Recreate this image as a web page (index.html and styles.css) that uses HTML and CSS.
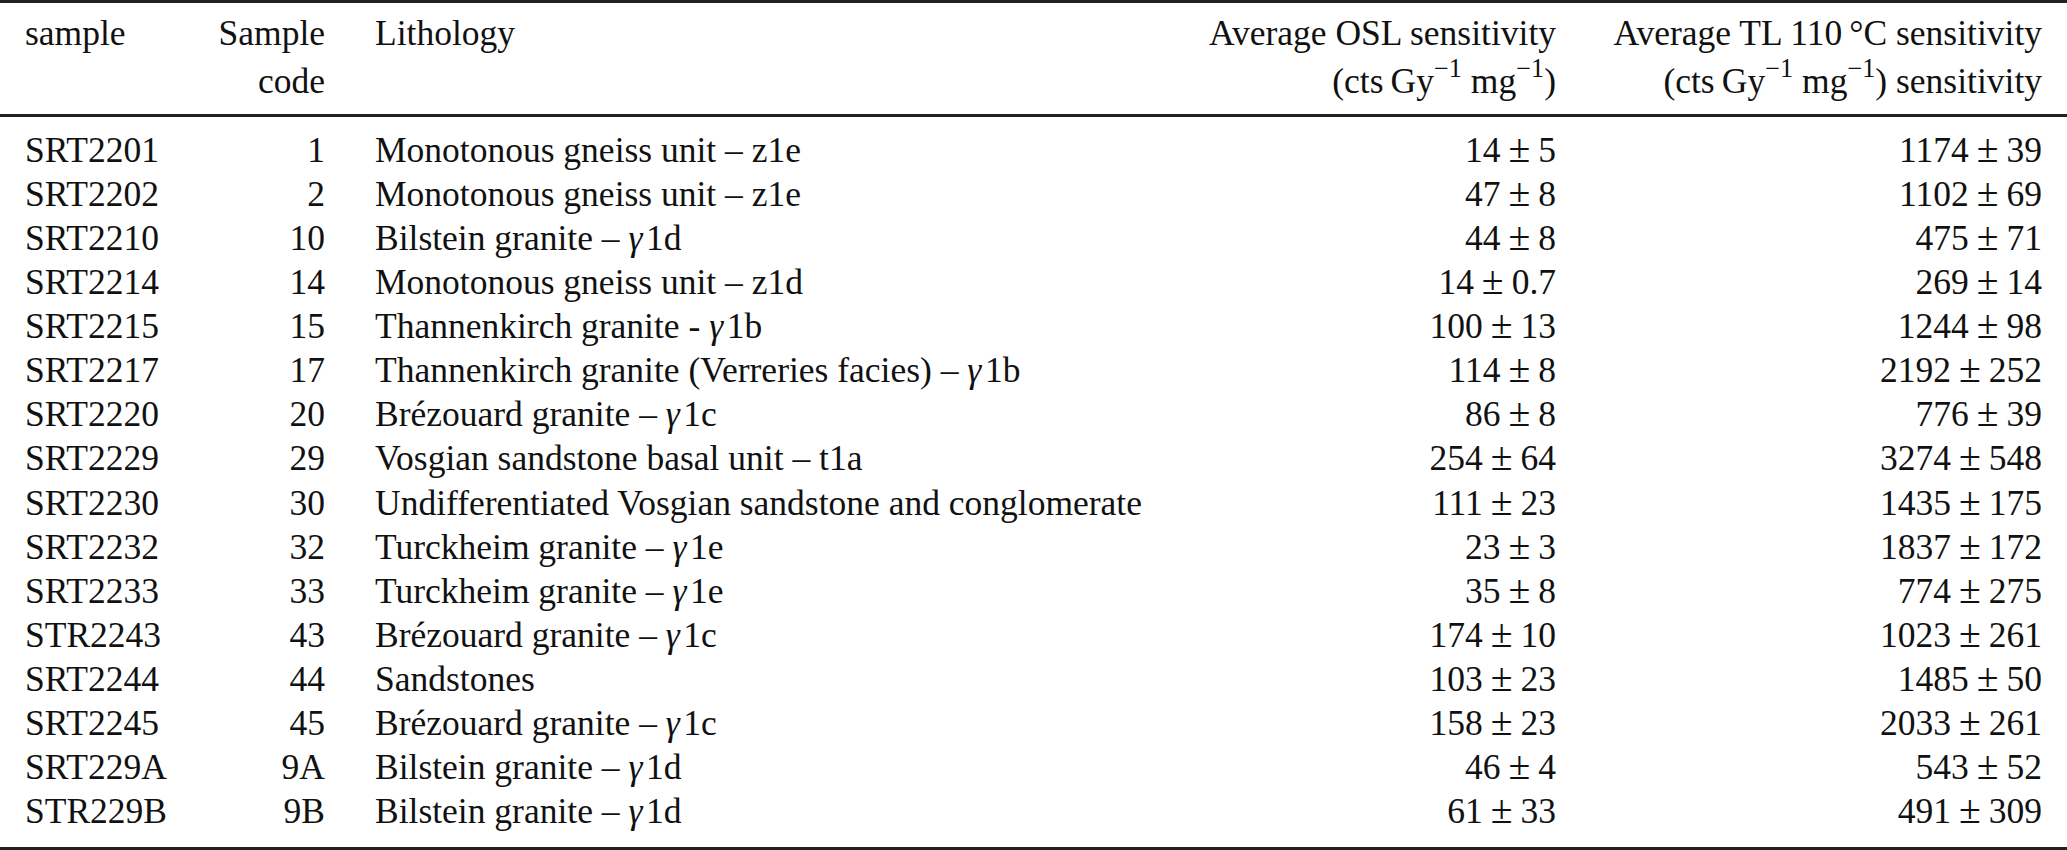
FILE: index.html
```html
<!DOCTYPE html>
<html lang="en">
<head>
<meta charset="utf-8">
<title>Sample sensitivities</title>
<link rel="stylesheet" href="styles.css">
</head>
<body>
<table class="data-table">
  <colgroup>
    <col class="c1"><col class="c2"><col class="c3"><col class="c4"><col class="c5">
  </colgroup>
  <thead>
    <tr>
      <th class="left">sample</th>
      <th class="right">Sample<br>code</th>
      <th class="left">Lithology</th>
      <th class="right">Average OSL sensitivity<br>(cts&#8201;Gy<sup>−1</sup> mg<sup>−1</sup>)</th>
      <th class="right">Average TL 110&#8201;°C sensitivity<br>(cts&#8201;Gy<sup>−1</sup> mg<sup>−1</sup>) sensitivity</th>
    </tr>
  </thead>
  <tbody>
    <tr class="first"><td>SRT2201</td><td class="right">1</td><td>Monotonous gneiss unit – z1e</td><td class="right">14<span class="pm">±</span>5</td><td class="right">1174<span class="pm">±</span>39</td></tr>
    <tr><td>SRT2202</td><td class="right">2</td><td>Monotonous gneiss unit – z1e</td><td class="right">47<span class="pm">±</span>8</td><td class="right">1102<span class="pm">±</span>69</td></tr>
    <tr><td>SRT2210</td><td class="right">10</td><td>Bilstein granite – <i class="g">γ</i>1d</td><td class="right">44<span class="pm">±</span>8</td><td class="right">475<span class="pm">±</span>71</td></tr>
    <tr><td>SRT2214</td><td class="right">14</td><td>Monotonous gneiss unit – z1d</td><td class="right">14<span class="pm">±</span>0.7</td><td class="right">269<span class="pm">±</span>14</td></tr>
    <tr><td>SRT2215</td><td class="right">15</td><td>Thannenkirch granite - <i class="g">γ</i>1b</td><td class="right">100<span class="pm">±</span>13</td><td class="right">1244<span class="pm">±</span>98</td></tr>
    <tr><td>SRT2217</td><td class="right">17</td><td>Thannenkirch granite (Verreries facies) – <i class="g">γ</i>1b</td><td class="right">114<span class="pm">±</span>8</td><td class="right">2192<span class="pm">±</span>252</td></tr>
    <tr><td>SRT2220</td><td class="right">20</td><td>Brézouard granite – <i class="g">γ</i>1c</td><td class="right">86<span class="pm">±</span>8</td><td class="right">776<span class="pm">±</span>39</td></tr>
    <tr><td>SRT2229</td><td class="right">29</td><td>Vosgian sandstone basal unit – t1a</td><td class="right">254<span class="pm">±</span>64</td><td class="right">3274<span class="pm">±</span>548</td></tr>
    <tr><td>SRT2230</td><td class="right">30</td><td>Undifferentiated Vosgian sandstone and conglomerate</td><td class="right">111<span class="pm">±</span>23</td><td class="right">1435<span class="pm">±</span>175</td></tr>
    <tr><td>SRT2232</td><td class="right">32</td><td>Turckheim granite – <i class="g">γ</i>1e</td><td class="right">23<span class="pm">±</span>3</td><td class="right">1837<span class="pm">±</span>172</td></tr>
    <tr><td>SRT2233</td><td class="right">33</td><td>Turckheim granite – <i class="g">γ</i>1e</td><td class="right">35<span class="pm">±</span>8</td><td class="right">774<span class="pm">±</span>275</td></tr>
    <tr><td>STR2243</td><td class="right">43</td><td>Brézouard granite – <i class="g">γ</i>1c</td><td class="right">174<span class="pm">±</span>10</td><td class="right">1023<span class="pm">±</span>261</td></tr>
    <tr><td>SRT2244</td><td class="right">44</td><td>Sandstones</td><td class="right">103<span class="pm">±</span>23</td><td class="right">1485<span class="pm">±</span>50</td></tr>
    <tr><td>SRT2245</td><td class="right">45</td><td>Brézouard granite – <i class="g">γ</i>1c</td><td class="right">158<span class="pm">±</span>23</td><td class="right">2033<span class="pm">±</span>261</td></tr>
    <tr><td>SRT229A</td><td class="right">9A</td><td>Bilstein granite – <i class="g">γ</i>1d</td><td class="right">46<span class="pm">±</span>4</td><td class="right">543<span class="pm">±</span>52</td></tr>
    <tr class="last"><td>STR229B</td><td class="right">9B</td><td>Bilstein granite – <i class="g">γ</i>1d</td><td class="right">61<span class="pm">±</span>33</td><td class="right">491<span class="pm">±</span>309</td></tr>
  </tbody>
</table>
</body>
</html>
```

FILE: styles.css
```css
html, body {
  margin: 0;
  padding: 0;
  background: #ffffff;
}

body {
  font-family: "Liberation Serif", "Times New Roman", serif;
  font-size: 35.5px;
  color: #111111;
}

.data-table {
  width: 2067px;
  border-collapse: collapse;
  table-layout: fixed;
  border-top: 3px solid #222222;
  border-bottom: 3px solid #222222;
}

.c1 { width: 170px; }
.c2 { width: 180px; }
.c3 { width: 800px; }
.c4 { width: 431px; }
.c5 { width: 486px; }

.data-table th,
.data-table td {
  padding: 0 25px;
  white-space: nowrap;
  vertical-align: top;
  text-align: left;
  font-weight: normal;
}

.data-table thead th {
  line-height: 48px;
  padding-top: 6px;
  padding-bottom: 9px;
  border-bottom: 3px solid #222222;
}

.data-table td {
  line-height: 44.07px;
}

.data-table tr.first td {
  padding-top: 11px;
}

.data-table tr.last td {
  padding-bottom: 14px;
}

.data-table .right {
  text-align: right;
}

.data-table sup {
  font-size: 0.74em;
  line-height: 0;
  vertical-align: 0.6em;
}

.pm {
  display: inline-block;
  font-size: 1.12em;
  line-height: 0;
  margin: 0 0.2em;
}

.g {
  font-style: italic;
  margin-right: 0.1em;
}
```
